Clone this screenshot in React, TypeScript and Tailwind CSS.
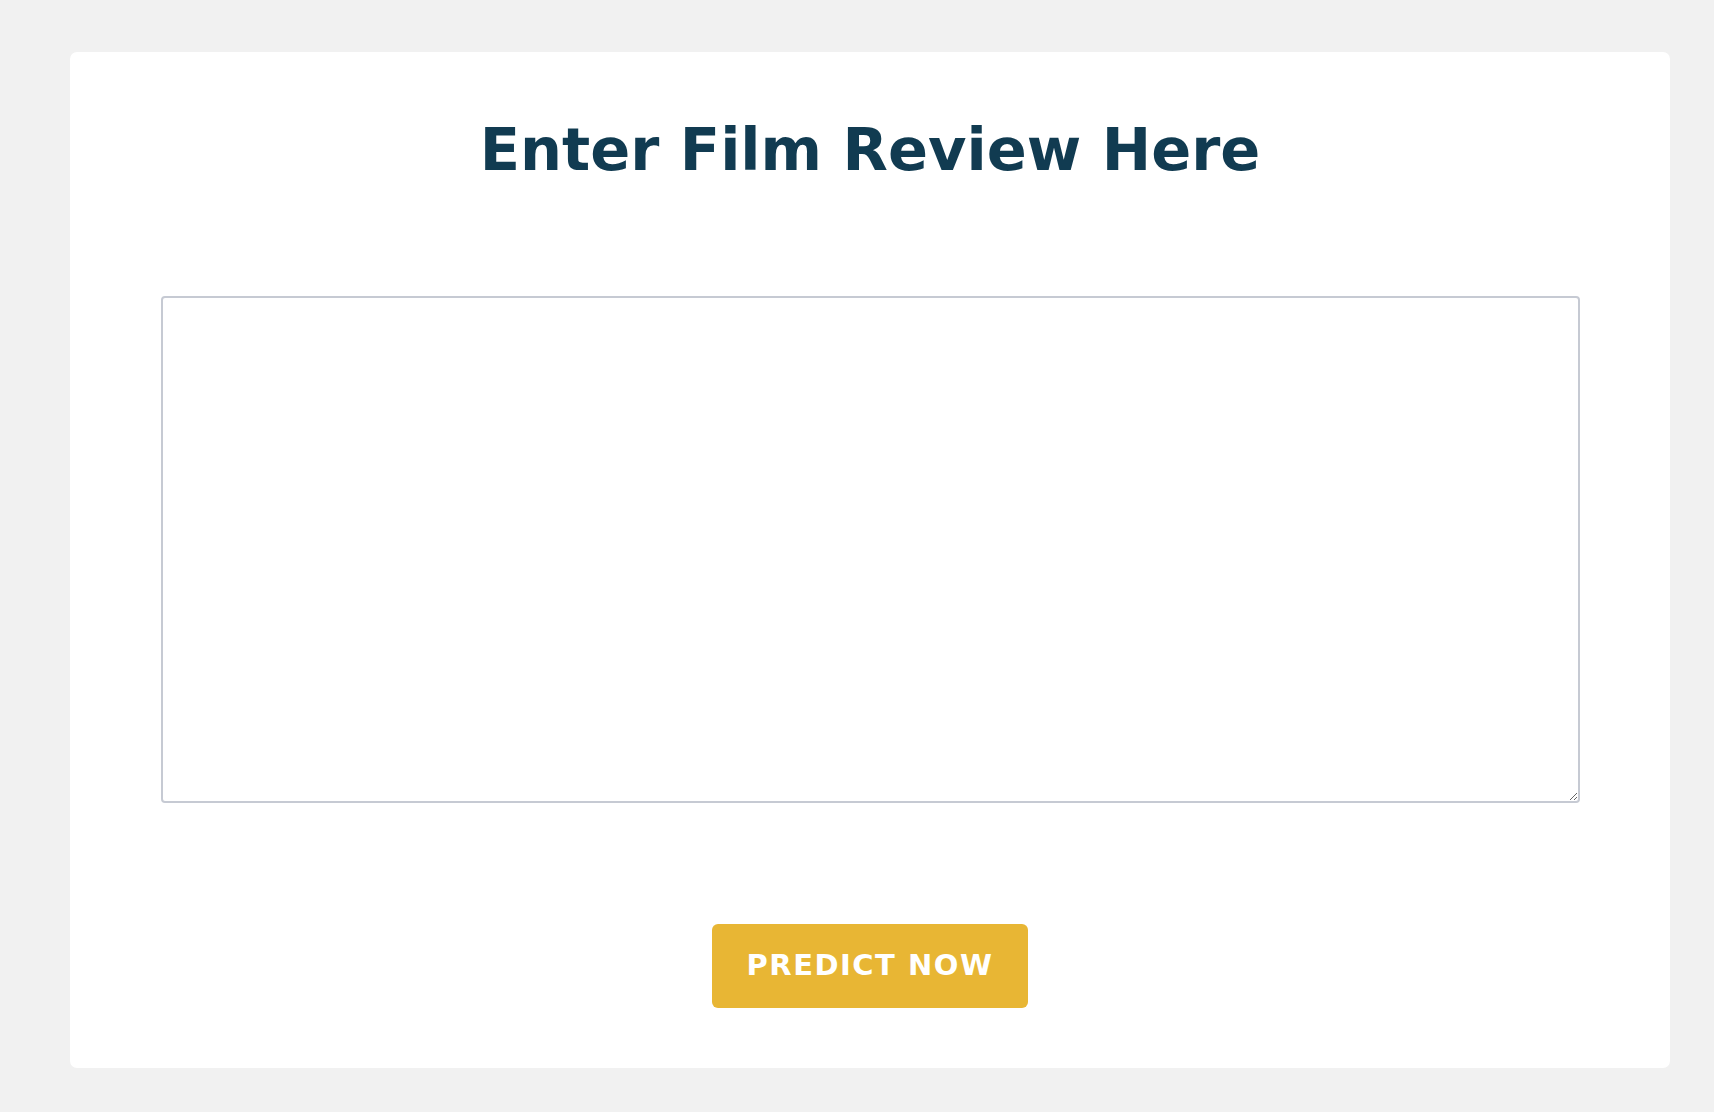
import React from "react";

export default function App() {
  return (
    <div className="min-h-[1112px] w-full bg-[#f1f1f1] pt-[52px] pb-[44px]">
      <div className="ml-[70px] flex h-[1016px] w-[1600px] flex-col items-center rounded-[7px] bg-white">
        <h1
          className="mt-[58px] h-[80px] text-[59px] font-bold leading-[80px] tracking-[0px] text-[#113b51]"
          style={{ fontFamily: '"DejaVu Sans", "Noto Sans", sans-serif' }}
        >
          Enter Film Review Here
        </h1>
        <textarea className="mt-[106px] h-[507px] w-[1419px] resize rounded-[4px] border-2 border-[#c6cad3] bg-white p-3 outline-none" />
        <button
          className="mt-[121px] flex h-[84px] w-[316px] items-center justify-center rounded-[6px] bg-[#e8b634] text-[29px] font-bold tracking-[1.5px] text-white"
          style={{ fontFamily: '"DejaVu Sans", "Noto Sans", sans-serif' }}
        >
          PREDICT NOW
        </button>
      </div>
    </div>
  );
}
